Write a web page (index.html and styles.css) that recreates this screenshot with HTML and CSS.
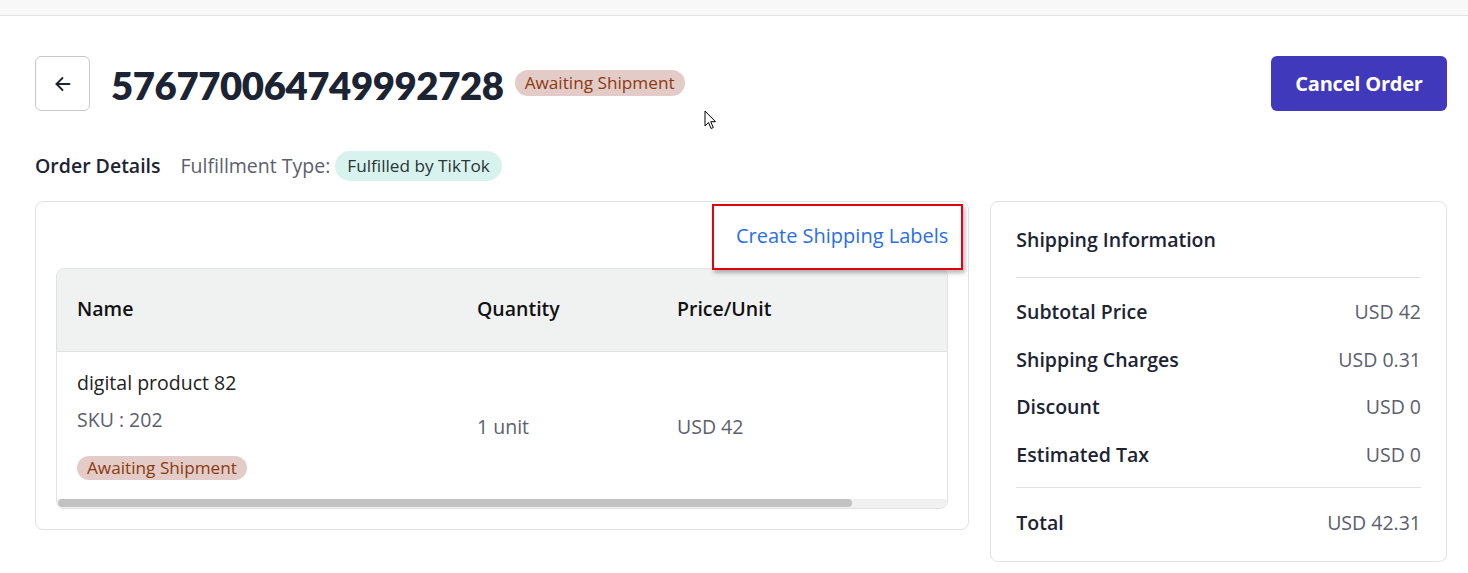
FILE: index.html
```html
<!DOCTYPE html>
<html>
<head>
<meta charset="utf-8">
<link rel="stylesheet" href="styles.css">
</head>
<body>
<div class="topbar"></div>
<main class="page">
  <div class="header">
    <div class="header-left">
      <button class="back-btn" aria-label="Back">
        <svg width="20" height="20" viewBox="0 0 20 20" fill="none" stroke="#1c2333" stroke-width="1.8" stroke-linecap="round" stroke-linejoin="round"><path d="M16.5 10H3.5"/><path d="M9.5 4L3.5 10l6 6"/></svg>
      </button>
      <h1 class="order-id">576770064749992728</h1>
      <span class="badge badge-await">Awaiting Shipment</span>
    </div>
    <button class="cancel-btn">Cancel Order</button>
  </div>
  <div class="subheader">
    <span class="sub-title">Order Details</span>
    <span class="sub-label">Fulfillment Type:</span>
    <span class="badge badge-ful">Fulfilled by TikTok</span>
  </div>
  <div class="content">
    <section class="card items-card">
      <div class="items-top">
        <a class="link" href="#">Create Shipping Labels</a>
        <div class="annot"></div>
      </div>
      <div class="table-wrap">
        <div class="trow thead">
          <div class="c c-name">Name</div>
          <div class="c c-qty">Quantity</div>
          <div class="c c-price">Price/Unit</div>
        </div>
        <div class="trow tbody">
          <div class="c c-name">
            <div class="pname">digital product 82</div>
            <div class="sku">SKU : 202</div>
            <span class="badge badge-await badge-sm">Awaiting Shipment</span>
          </div>
          <div class="c c-qty muted">1 unit</div>
          <div class="c c-price muted">USD 42</div>
        </div>
        <div class="scrollbar"><div class="thumb"></div></div>
      </div>
    </section>
    <aside class="card ship-card">
      <div class="ship-title">Shipping Information</div>
      <div class="ship-rows">
        <div class="srow"><span>Subtotal Price</span><span class="val">USD 42</span></div>
        <div class="srow"><span>Shipping Charges</span><span class="val">USD 0.31</span></div>
        <div class="srow"><span>Discount</span><span class="val">USD 0</span></div>
        <div class="srow"><span>Estimated Tax</span><span class="val">USD 0</span></div>
      </div>
      <div class="srow total"><span>Total</span><span class="val">USD 42.31</span></div>
    </aside>
  </div>
</main>
<svg class="cursor" width="13" height="20" viewBox="0 0 13 20"><path d="M1 1v15l3.5-3.5 2.6 6 2.2-1-2.6-5.8H11.5z" fill="#fff" stroke="#000" stroke-width="1" stroke-linejoin="round"/></svg>
</body>
</html>
```

FILE: styles.css
```css
* { box-sizing: border-box; }
html, body { margin: 0; padding: 0; background: #fff; }
body {
  font-family: "Open Sans", Lato, "Liberation Sans", sans-serif;
  color: #1c2333;
  position: relative;
}
.topbar {
  height: 16px;
  background: #f8f8f8;
  border-bottom: 1px solid #e2e2e2;
}
.page { padding: 40px 21px 0 35px; }
.header {
  display: flex;
  align-items: center;
  justify-content: space-between;
  height: 55px;
}
.header-left { display: flex; align-items: center; }
.back-btn {
  width: 55px; height: 55px;
  border: 1px solid #c9c9c9;
  border-radius: 6px;
  background: #fff;
  display: flex; align-items: center; justify-content: center;
  padding: 0;
}
.order-id {
  margin: 0 11px 0 21px;
  font-family: Lato, "Open Sans", sans-serif;
  font-size: 38.3px;
  font-weight: 800;
  letter-spacing: -0.4px;
  color: #1c2333;
  line-height: 1;
  padding-top: 4px;
}
.badge {
  display: inline-flex;
  align-items: center;
  border-radius: 14px;
  white-space: nowrap;
}
.badge-await {
  background: #e3ccc8;
  color: #8b3a10;
  font-size: 17.2px;
  height: 26px;
  padding: 0 10px;
  margin-top: -2px;
}
.cancel-btn {
  width: 176px; height: 55px;
  background: #4139bb;
  color: #fff;
  border: none;
  border-radius: 6px;
  font-family: inherit;
  font-size: 20px;
  font-weight: 700;
  letter-spacing: -0.2px;
}
.subheader {
  display: flex;
  align-items: center;
  margin-top: 40px;
  height: 30px;
  font-size: 19.5px;
}
.sub-title { font-weight: 600; color: #1c2333; padding-bottom: 2px; }
.sub-label { color: #5b606d; margin-left: 20px; margin-right: 5px; padding-bottom: 2px; }
.badge-ful {
  background: #d8f3ee;
  color: #2b3536;
  height: 30px;
  padding: 0 12px 1px;
  border-radius: 15px;
  font-size: 17.2px;
}
.content {
  display: flex;
  gap: 21px;
  margin-top: 20px;
  align-items: flex-start;
}
.card {
  border: 1px solid #e2e2e2;
  border-radius: 8px;
  background: #fff;
}
.items-card {
  width: 935px;
  height: 329px;
  padding: 0 20px 0 20px;
}
.items-top {
  height: 66px;
  display: flex;
  justify-content: flex-end;
  align-items: flex-start;
  position: relative;
}
.link {
  color: #2a6ee8;
  text-decoration: none;
  font-size: 20px;
  margin-top: 20px;
}
.annot {
  position: absolute;
  left: 656px; top: 2px;
  width: 251px; height: 66px;
  border: 2px solid #e3000f;
  box-shadow: 2px 3px 4px rgba(0,0,0,0.28);
  pointer-events: none;
  z-index: 2;
}
.table-wrap {
  border: 1px solid #e2e2e2;
  border-radius: 8px;
  overflow: hidden;
  height: 241px;
  display: flex;
  flex-direction: column;
}
.trow { display: flex; }
.thead {
  background: #f0f2f1;
  height: 83px;
  align-items: center;
  border-bottom: 1px solid #e2e2e2;
  font-weight: 600;
  font-size: 19.5px;
  color: #111;
  padding-bottom: 3px;
}
.c { padding-left: 20px; }
.c-name { width: 400px; }
.c-qty { width: 200px; }
.c-price { width: 200px; }
.tbody {
  flex: 1;
  align-items: center;
  font-size: 19.5px;
}
.pname { color: #222; line-height: 24px; }
.sku { color: #5b606d; margin-top: 13px; line-height: 24px; }
.badge-sm { margin-top: 24px; height: 24px; font-size: 17.2px; padding: 0 10px; }
.muted { color: #5b606d; margin-top: 2px; }
.scrollbar {
  height: 9px;
  background: #f1f1f1;
}
.thumb {
  width: 794px;
  height: 8px;
  margin-left: 1px;
  background: #c2c2c2;
  border-radius: 4px;
}
.ship-card {
  width: 457px;
  height: 361px;
  padding: 0 25px;
}
.ship-title {
  font-size: 19.5px;
  font-weight: 600;
  height: 76px;
  display: flex;
  align-items: center;
  border-bottom: 1px solid #e2e2e2;
}
.ship-rows {
  padding: 10px 0 9px;
  border-bottom: 1px solid #e2e2e2;
}
.srow {
  display: flex;
  justify-content: space-between;
  align-items: center;
  height: 47.5px;
  font-size: 19.5px;
  font-weight: 600;
  color: #1c2333;
}
.srow .val { font-weight: 400; color: #5b606d; }
.total { height: 68px; }
.cursor {
  position: absolute;
  left: 704px; top: 110px;
}
```
